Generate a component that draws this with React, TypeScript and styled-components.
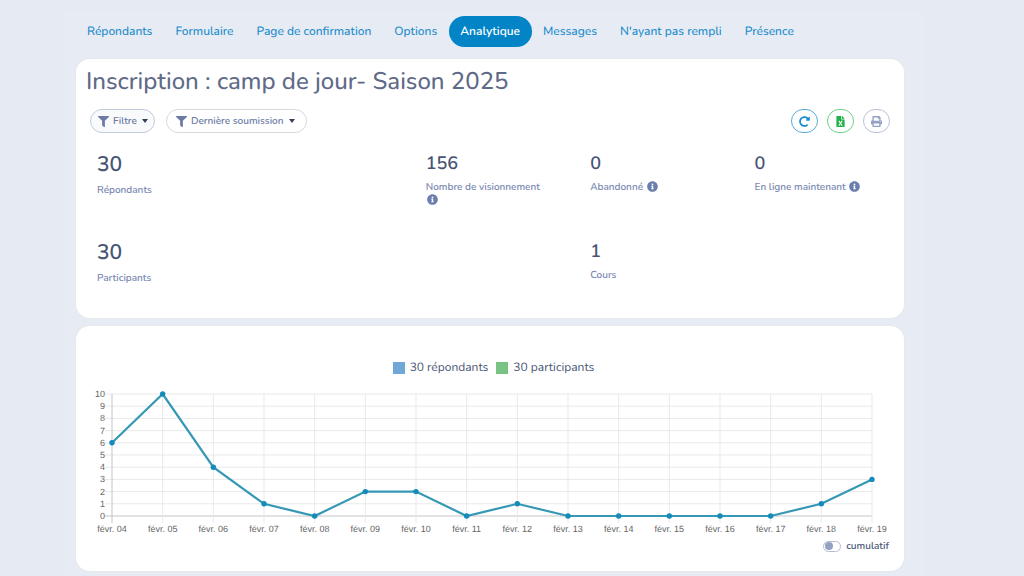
import React, { useState } from 'react';
import styled, { createGlobalStyle, css } from 'styled-components';
import { FaFilter, FaRedoAlt, FaFileExcel, FaPrint, FaInfoCircle } from 'react-icons/fa';

const GlobalStyle = createGlobalStyle`
  *, *::before, *::after { box-sizing: border-box; }
  body {
    margin: 0;
    background: #e5eaf3;
    color: #4a5677;
    font-family: Nunito, Lato, 'Open Sans', sans-serif;
    font-size: 12px;
    text-rendering: geometricPrecision;
  }
`;

const Shell = styled.div`
  margin: 12px 100px 0 64px;
  padding: 4px 20px 5px 12px;
  background: #e7ebf4;
`;

const Tabs = styled.nav`
  display: flex;
  align-items: center;
  height: 31px;
`;

const Tab = styled.a<{ $active?: boolean }>`
  display: flex;
  align-items: center;
  height: 31px;
  padding: 0 12px 0 11px;
  border-radius: 16px;
  color: #1a8ccb;
  font-size: 12px;
  font-weight: 500;
  text-decoration: none;
  white-space: nowrap;
  ${(p) => p.$active && css`
    background: #0284c7;
    color: #fff;
    font-weight: 600;
  `}
`;

const Card = styled.section`
  background: #fff;
  border-radius: 14px;
  box-shadow: 0 0 1px 1px #e6e8ec;
`;

const SummaryCard = styled(Card)`
  margin-top: 12px;
  padding: 7px 0 33px;
`;

const Title = styled.h1`
  margin: 0;
  padding: 0 10px;
  color: #5f6a88;
  font-size: 24px;
  line-height: 32px;
  font-weight: 500;
`;

const Toolbar = styled.div`
  display: flex;
  align-items: center;
  justify-content: space-between;
  padding: 0 14px;
  margin-top: 11px;
`;

const Group = styled.div<{ $gap: number }>`
  display: flex;
  gap: ${(p) => p.$gap}px;
`;

const FilterButton = styled.button<{ $filled?: boolean }>`
  display: flex;
  align-items: center;
  gap: 4px;
  height: 24px;
  padding: 0 ${(p) => (p.$filled ? 6 : 11)}px 0 ${(p) => (p.$filled ? 7 : 9)}px;
  border: 1px solid ${(p) => (p.$filled ? '#c3cade' : '#d6d9e0')};
  border-radius: 12px;
  background: ${(p) => (p.$filled ? '#f8fafc' : '#fff')};
  color: #6b7ba6;
  font: inherit;
  font-size: 10px;
  font-weight: 600;
  &::after {
    content: '';
    margin-left: 1px;
    border: solid transparent;
    border-width: 4px 3px 0;
    border-top-color: #334155;
  }
`;

const ActionButton = styled.button<{ $color: string; $line: string }>`
  display: flex;
  align-items: center;
  justify-content: center;
  width: 27px;
  height: 24px;
  padding: 0;
  border: 1px solid ${(p) => p.$line};
  border-radius: 12px;
  background: #fff;
  color: ${(p) => p.$color};
`;

const Stats = styled.dl`
  display: grid;
  grid-template-columns: 22fr 11fr 11fr 10fr;
  row-gap: 31px;
  margin: 17px 0 0;
  padding-left: 21px;
`;

const Stat = styled.div<{ $column: number }>`
  display: flex;
  flex-direction: column-reverse;
  justify-content: flex-end;
  grid-column: ${(p) => p.$column};
  padding-right: 36px;
`;

const StatLabel = styled.dt`
  margin-top: 3px;
  color: #7a89b3;
  font-size: 10px;
  line-height: 13px;
  font-weight: 600;
`;

const StatValue = styled.dd<{ $large?: boolean }>`
  margin: 0;
  color: #465374;
  font-size: ${(p) => (p.$large ? 21 : 18)}px;
  line-height: ${(p) => (p.$large ? 31 : 28)}px;
  font-weight: 600;
`;

const InfoIcon = styled(FaInfoCircle)`
  margin-left: 1px;
  vertical-align: -2px;
`;

const ChartCard = styled(Card)`
  margin-top: 8px;
  padding: 32px 0 17px;
`;

const Legend = styled.ul`
  display: flex;
  justify-content: center;
  gap: 8px;
  margin: 0;
  padding: 0 0 0 7px;
  list-style: none;
`;

const LegendItem = styled.li<{ $color: string }>`
  display: flex;
  align-items: center;
  gap: 5px;
  font-size: 12px;
  line-height: 20px;
  &::before {
    content: '';
    width: 12px;
    height: 12px;
    background: ${(p) => p.$color};
  }
`;

const Plot = styled.svg`
  display: block;
  width: 100%;
  height: auto;
  font-family: 'Liberation Sans', Arial, sans-serif;
  font-size: 9px;
`;

const CumulativeToggle = styled.label`
  display: flex;
  align-items: center;
  justify-content: flex-end;
  gap: 5px;
  padding-right: 15px;
  font-size: 10px;
  line-height: 16px;
  font-weight: 600;
`;

const Switch = styled.input`
  appearance: none;
  display: flex;
  align-items: center;
  width: 18px;
  height: 11px;
  margin: 0;
  padding: 0 1px;
  border: 1px solid #b3bcd3;
  border-radius: 6px;
  background: #fff;
  &::before {
    content: '';
    width: 8px;
    height: 8px;
    border-radius: 50%;
    background: #94a1c3;
  }
  &:checked { justify-content: flex-end; }
`;

const tabs = ['Répondants', 'Formulaire', 'Page de confirmation', 'Options', 'Analytique', 'Messages', "N'ayant pas rempli", 'Présence'];

const stats = [
  { column: 1, value: '30', label: 'Répondants', large: true },
  { column: 2, value: '156', label: 'Nombre de visionnement', info: true },
  { column: 3, value: '0', label: 'Abandonné', info: true },
  { column: 4, value: '0', label: 'En ligne maintenant', info: true },
  { column: 1, value: '30', label: 'Participants', large: true },
  { column: 3, value: '1', label: 'Cours' },
];

const daily = [6, 10, 4, 1, 0, 2, 2, 0, 1, 0, 0, 0, 0, 0, 1, 3];

const LEFT = 36;
const RIGHT = 796;
const TOP = 16;
const BOTTOM = 138;

function Chart({ values }: { values: number[] }) {
  const max = values.reduce((a, b) => Math.max(a, b), 0);
  const step = max > 10 ? 5 : 1;
  const top = Math.ceil(max / step) * step;
  const x = (i: number) => LEFT + (i * (RIGHT - LEFT)) / (values.length - 1);
  const y = (v: number) => BOTTOM - (v * (BOTTOM - TOP)) / top;
  const ticks = Array.from({ length: top / step + 1 }, (_, i) => i * step);
  return (
    <Plot viewBox="0 0 828 160" role="img" aria-label="Répondants par jour">
      {ticks.map((t) => (
        <g key={t}>
          <line x1={LEFT - 7} x2={RIGHT} y1={y(t)} y2={y(t)} stroke={t === 0 ? '#c4c4c4' : '#e9e9e9'} />
          <text x={LEFT - 7} y={y(t) + 3} textAnchor="end" fill="#666">{t}</text>
        </g>
      ))}
      {values.map((_, i) => (
        <g key={i}>
          <line x1={x(i)} x2={x(i)} y1={TOP} y2={BOTTOM + 7} stroke={i === 0 ? '#c4c4c4' : '#e9e9e9'} />
          <text x={x(i)} y={BOTTOM + 16} textAnchor="middle" fill="#666">{`févr. ${String(i + 4).padStart(2, '0')}`}</text>
        </g>
      ))}
      <polyline points={values.map((v, i) => `${x(i)},${y(v)}`).join(' ')} fill="none" stroke="#3698b5" strokeWidth={2.2} />
      {values.map((v, i) => (
        <circle key={i} cx={x(i)} cy={y(v)} r={2.7} fill="#158bbb" />
      ))}
    </Plot>
  );
}

export default function App() {
  const [cumulative, setCumulative] = useState(false);
  let total = 0;
  const values = cumulative ? daily.map((v) => (total += v)) : daily;
  return (
    <>
      <GlobalStyle />
      <Shell>
        <Tabs>
          {tabs.map((t) => (
            <Tab key={t} href="#" $active={t === 'Analytique'} aria-current={t === 'Analytique' ? 'page' : undefined}>{t}</Tab>
          ))}
        </Tabs>
        <SummaryCard>
          <Title>Inscription : camp de jour- Saison 2025</Title>
          <Toolbar>
            <Group $gap={11}>
              <FilterButton $filled><FaFilter size={11} />Filtre</FilterButton>
              <FilterButton><FaFilter size={11} />Dernière soumission</FilterButton>
            </Group>
            <Group $gap={9}>
              <ActionButton aria-label="Actualiser" $color="#1a8ccb" $line="#5aabd9"><FaRedoAlt size={11} /></ActionButton>
              <ActionButton aria-label="Exporter vers Excel" $color="#22b14c" $line="#6fcf86"><FaFileExcel size={11} /></ActionButton>
              <ActionButton aria-label="Imprimer" $color="#94a1c3" $line="#b9c1d8"><FaPrint size={11} /></ActionButton>
            </Group>
          </Toolbar>
          <Stats>
            {stats.map((s) => (
              <Stat key={s.label} $column={s.column}>
                <StatLabel>{s.label} {s.info && <InfoIcon size={11} color="#6b7fae" />}</StatLabel>
                <StatValue $large={s.large}>{s.value}</StatValue>
              </Stat>
            ))}
          </Stats>
        </SummaryCard>
        <ChartCard>
          <Legend>
            <LegendItem $color="#6fa8d6">30 répondants</LegendItem>
            <LegendItem $color="#78c283">30 participants</LegendItem>
          </Legend>
          <Chart values={values} />
          <CumulativeToggle>
            <Switch type="checkbox" checked={cumulative} onChange={(e) => setCumulative(e.target.checked)} />
            cumulatif
          </CumulativeToggle>
        </ChartCard>
      </Shell>
    </>
  );
}
